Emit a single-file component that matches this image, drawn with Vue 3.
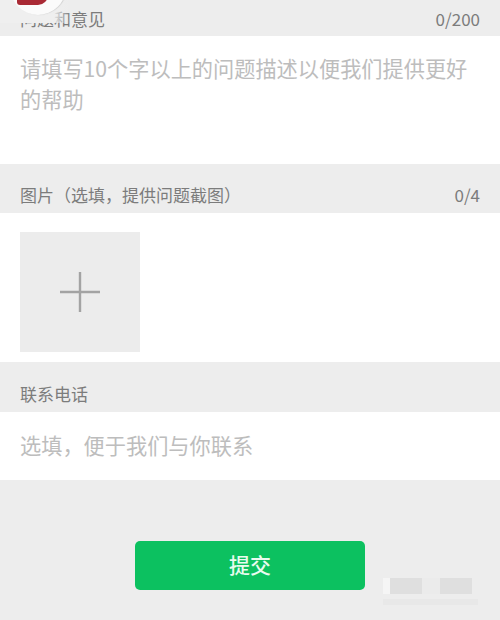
<script setup>
const sections = [
  { label: '问题和意见', count: '0/200' },
  { label: '图片（选填，提供问题截图）', count: '0/4' },
  { label: '联系电话', count: '' }
]
</script>

<template>
  <div class="page">
    <div class="head head-first">
      <span>{{ sections[0].label }}</span>
      <span class="count">{{ sections[0].count }}</span>
    </div>
    <div class="panel panel-text">
      <p class="hint">请填写10个字以上的问题描述以便我们提供更好的帮助</p>
    </div>

    <div class="head">
      <span>{{ sections[1].label }}</span>
      <span class="count">{{ sections[1].count }}</span>
    </div>
    <div class="panel panel-image">
      <div class="add">
        <svg width="40" height="40" viewBox="0 0 40 40">
          <path d="M0 20H40M20 0V40" stroke="#a3a3a3" stroke-width="2.4" fill="none" />
        </svg>
      </div>
    </div>

    <div class="head head-phone">
      <span>{{ sections[2].label }}</span>
    </div>
    <div class="panel panel-phone">
      <p class="hint">选填，便于我们与你联系</p>
    </div>

    <div class="actions">
      <button class="submit" type="button">提交</button>
    </div>

    <div class="veil"></div>
    <div class="floating">
      <div class="floating-mark"></div>
    </div>

    <div class="watermark">
      <div class="wm-blocks">
        <i class="wm-a"></i><i class="wm-b"></i><i class="wm-b"></i><i class="wm-c"></i><i class="wm-b"></i><i class="wm-b"></i>
      </div>
      <div class="wm-line"></div>
    </div>
  </div>
</template>

<style>
html, body { margin: 0; background: #ededed; }
</style>

<style scoped>
.page {
  position: relative;
  width: 500px;
  height: 620px;
  overflow: hidden;
  background: #ededed;
  font-family: "Noto Sans CJK SC", "Noto Sans", sans-serif;
  text-spacing-trim: space-all;
}
.head {
  height: 49px;
  box-sizing: border-box;
  padding: 0 20px 6px;
  display: flex;
  align-items: flex-end;
  justify-content: space-between;
  font-size: 17px;
  line-height: 24px;
  color: #7c7c7c;
}
.head-first { height: 36px; padding-bottom: 5px; }
.head-phone { height: 50px; }
.panel { background: #fff; box-sizing: border-box; }
.panel-text { height: 128px; padding: 16px 20px 0; }
.panel-image { height: 149px; padding: 19px 20px 0; }
.panel-phone { height: 68px; padding: 17px 20px 0; }
.hint {
  margin: 0;
  font-size: 21.2px;
  line-height: 31px;
  font-weight: 400;
  color: #bdbdbd;
}
.add {
  width: 120px;
  height: 120px;
  background: #ececec;
  display: flex;
  align-items: center;
  justify-content: center;
}
.actions {
  padding-top: 61px;
  display: flex;
  justify-content: center;
}
.submit {
  width: 230px;
  height: 49px;
  border: 0;
  padding: 0 0 3px;
  border-radius: 5px;
  background: #0cc160;
  color: #e9fbef;
  font-family: inherit;
  font-size: 21px;
  font-weight: 500;
}
.veil {
  position: absolute;
  left: 0;
  top: 0;
  width: 70px;
  height: 23px;
  background: linear-gradient(90deg, #efefef 75%, rgba(239, 239, 239, 0));
}
.floating {
  position: absolute;
  left: 10px;
  top: -41px;
  width: 56px;
  height: 56px;
  border-radius: 50%;
  background: #fbfbfb;
  box-shadow: 1px 0 1px #cfcfcf;
  overflow: hidden;
}
.floating-mark {
  position: absolute;
  left: 7px;
  top: 36px;
  width: 31px;
  height: 10px;
  border-radius: 0 0 10px 3px;
  background: #a92a35;
}
.watermark {
  position: absolute;
  left: 383px;
  top: 578px;
  width: 95px;
}
.wm-blocks { display: flex; }
.wm-blocks i { display: block; height: 16px; }
.wm-a { width: 7px; background: #f5f5f5; }
.wm-b { width: 16px; background: #dfdfdf; }
.wm-c { width: 18px; background: #ebebeb; }
.wm-line { height: 6px; margin-top: 5px; background: #e8e8e8; }
</style>
